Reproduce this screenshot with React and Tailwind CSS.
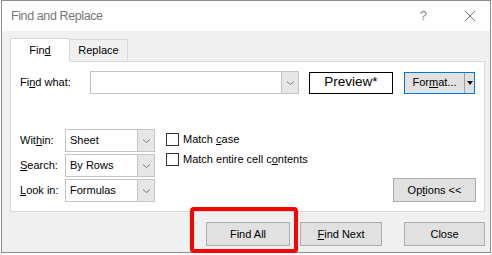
import React from "react";

const font = { fontFamily: '"Liberation Sans", Arial, sans-serif' };

function Chevron() {
  return (
    <svg width="9" height="6" viewBox="0 0 9 6" className="text-[#7a7a7a]">
      <path d="M1 1.5 L4.5 4.5 L8 1.5" fill="none" stroke="currentColor" strokeWidth="1" />
    </svg>
  );
}

function Select({ value, w = "w-[90px]" }) {
  return (
    <div className={`flex h-[23px] ${w} border border-[#c4c4c4] bg-white`}>
      <div className="flex flex-1 items-center pl-[4px] text-[11px] text-black">{value}</div>
      <div className="flex w-[17px] items-center justify-center border-l border-[#c4c4c4] bg-[#e6e6e6]">
        <Chevron />
      </div>
    </div>
  );
}

function Check({ children }) {
  return (
    <div className="flex h-[16px] items-center gap-[4px] text-[11px] leading-[16px] text-black">
      <div className="h-[13px] w-[13px] border border-[#333] bg-white" />
      <span>{children}</span>
    </div>
  );
}

function Btn({ children, w }) {
  return (
    <div
      className={`flex h-[24px] ${w} items-center justify-center border border-[#adadad] bg-[#e1e1e1] text-[11px] text-black`}
    >
      {children}
    </div>
  );
}

export default function App() {
  return (
    <div className="relative h-[255px] w-[492px] overflow-hidden bg-white" style={font}>
      <div className="ml-[1px] flex h-[253px] w-[490px] flex-col border border-[#8c8c8c]">
        {/* title bar */}
        <div className="flex h-[30px] items-center bg-white pl-[9px] pr-[14px]">
          <span className="flex-1 text-[12.5px] tracking-[-0.4px] text-[#777]">Find and Replace</span>
          <span className="mr-[37px] text-[13px] text-[#888]">?</span>
          <svg width="12" height="12" viewBox="0 0 12 12">
            <path d="M1 1 L11 11 M11 1 L1 11" stroke="#777" strokeWidth="1" />
          </svg>
        </div>

        <div className="flex flex-1 flex-col bg-[#f0f0f0] pl-[8px]">
          {/* tabs */}
          <div className="mt-[7px] flex items-end">
            <div className="-mb-px z-10 flex h-[24px] w-[60px] items-center justify-center border border-b-0 border-[#d9d9d9] bg-white text-[11px] text-black">
              Fin<u>d</u>
            </div>
            <div className="flex h-[22px] w-[58px] items-center justify-center border border-b-0 border-l-0 border-[#d9d9d9] text-[11px] text-black">
              Replace
            </div>
          </div>

          {/* panel */}
          <div className="flex h-[151px] w-[475px] flex-col border border-[#d9d9d9] bg-white pl-[9px] pt-[9px]">
            <div className="flex items-center">
              <span className="w-[70px] text-[11px] text-black">
                Fi<u>n</u>d what:
              </span>
              <Select value="" w="w-[209px]" />
              <div className="ml-[10px] flex h-[22px] w-[84px] items-center justify-center border border-black text-[13.5px] text-black">
                Preview*
              </div>
              <div className="ml-[11px] flex h-[22px] w-[71px] border border-[#0078d7] bg-[#e1e1e1] text-[11px] text-black">
                <div className="flex flex-1 items-center justify-center">
                  For<u>m</u>at...
                </div>
                <div className="flex w-[10px] items-center justify-center border-l border-[#a0a0a0]">
                  <svg width="6" height="4" viewBox="0 0 6 4">
                    <path d="M0 0 H6 L3 4 Z" fill="#000" />
                  </svg>
                </div>
              </div>
            </div>

            <div className="mt-[35px] flex">
              <div className="flex flex-col gap-[2px]">
                <div className="flex items-center">
                  <span className="w-[45px] text-[11px] text-black">
                    Wit<u>h</u>in:
                  </span>
                  <Select value="Sheet" />
                </div>
                <div className="flex items-center">
                  <span className="w-[45px] text-[11px] text-black">
                    <u>S</u>earch:
                  </span>
                  <Select value="By Rows" />
                </div>
                <div className="flex items-center">
                  <span className="w-[45px] text-[11px] text-black">
                    <u>L</u>ook in:
                  </span>
                  <Select value="Formulas" />
                </div>
              </div>

              <div className="ml-[11px] mt-[2px] flex flex-col gap-[4px]">
                <Check>
                  Match <u>c</u>ase
                </Check>
                <Check>
                  Match entire cell c<u>o</u>ntents
                </Check>
              </div>

              <div className="ml-auto mr-[8px] flex items-end">
                <Btn w="w-[83px]">
                  Op<u>t</u>ions &lt;&lt;
                </Btn>
              </div>
            </div>
          </div>

          {/* footer */}
          <div className="mt-[10px] flex">
            <div className="ml-[196px]">
              <Btn w="w-[84px]">Find All</Btn>
            </div>
            <div className="ml-[10px]">
              <Btn w="w-[82px]">
                <u>F</u>ind Next
              </Btn>
            </div>
            <div className="ml-[22px]">
              <Btn w="w-[81px]">Close</Btn>
            </div>
          </div>
        </div>
      </div>

      {/* highlight box */}
      <div className="absolute left-[190px] top-[207px] h-[46px] w-[108px] rounded-[4px] border-4 border-[#ff0000]" />
    </div>
  );
}
